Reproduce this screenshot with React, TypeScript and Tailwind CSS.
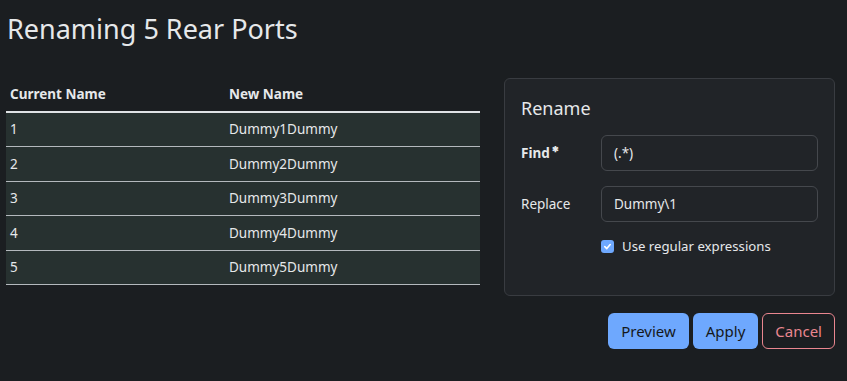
import React from "react"

const rows = [1, 2, 3, 4, 5]

export default function App() {
  return (
    <div className="min-h-[381px] w-[847px] bg-[#1b1e21] text-[#e6e8ea] font-['Noto_Sans',sans-serif]">
      <div className="h-[78px] px-[7px] pt-[10px]">
        <h1 className="text-[27px] leading-[38px] font-normal">Renaming 5 Rear Ports</h1>
      </div>
      <div className="flex gap-[24px] pl-[6px]">
        <div className="w-[474px]">
          <table className="w-full border-collapse text-[13.5px]">
            <thead>
              <tr className="h-[34px] border-b-2 border-[#dfe2e5]">
                <th className="w-[223px] pl-[4px] text-left font-bold">Current Name</th>
                <th className="text-left font-bold">New Name</th>
              </tr>
            </thead>
            <tbody>
              {rows.map((n) => (
                <tr key={n} className="h-[34.5px] bg-[#273130] border-b border-[#b4b9bd]">
                  <td className="pl-[4px]">{n}</td>
                  <td>Dummy{n}Dummy</td>
                </tr>
              ))}
            </tbody>
          </table>
        </div>
        <div className="flex flex-col">
          <div className="w-[331px] h-[218px] rounded-[6px] border border-[#393c41] bg-[#212428] px-[16px] pt-[16px]">
            <h2 className="text-[18px] leading-[26px] mb-[14px]">Rename</h2>
            <div className="flex items-center h-[36px] text-[13.5px]">
              <label className="w-[80px] font-bold">
                Find<span className="relative -top-[6px] ml-[2px] text-[8px]">✱</span>
              </label>
              <div className="flex-1 h-[36px] rounded-[6px] border border-[#45484d] px-[12px] flex items-center">(.*)</div>
            </div>
            <div className="flex items-center h-[36px] mt-[15px] text-[13.5px]">
              <label className="w-[80px]">Replace</label>
              <div className="flex-1 h-[36px] rounded-[6px] border border-[#45484d] px-[12px] flex items-center">Dummy\1</div>
            </div>
            <div className="flex items-center mt-[15px] ml-[80px] text-[13.2px]">
              <span className="w-[13px] h-[13px] rounded-[3px] bg-[#6ea8fe] flex items-center justify-center">
                <svg width="9" height="9" viewBox="0 0 10 10">
                  <path d="M2 5.2 4.2 7.3 8 2.8" fill="none" stroke="#fff" strokeWidth="1.8" strokeLinecap="round" strokeLinejoin="round" />
                </svg>
              </span>
              <span className="ml-[8px]">Use regular expressions</span>
            </div>
          </div>
          <div className="flex justify-end gap-[4px] mt-[17px] text-[15px]">
            <button className="h-[36px] px-[13px] rounded-[6px] bg-[#6ea8fe] text-[#15181b]">Preview</button>
            <button className="h-[36px] px-[13px] rounded-[6px] bg-[#6ea8fe] text-[#15181b]">Apply</button>
            <button className="h-[36px] px-[12px] rounded-[6px] border border-[#ea868f] text-[#ea868f]">Cancel</button>
          </div>
        </div>
      </div>
    </div>
  )
}
